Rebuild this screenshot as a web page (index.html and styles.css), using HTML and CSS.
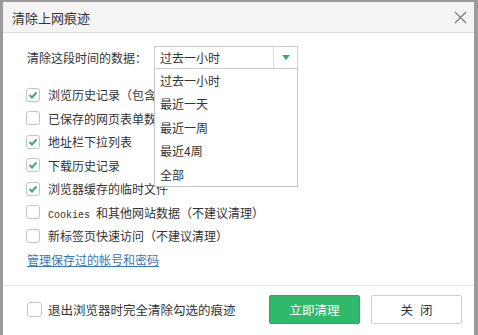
FILE: index.html
```html
<!DOCTYPE html>
<html lang="zh-CN">
<head>
    <meta charset="UTF-8">
    <meta name="viewport" content="width=device-width, initial-scale=1.0">
    <title>清除上网痕迹</title>
    <link rel="stylesheet" href="styles.css">
</head>
<body>
    <div class="dialog">
        <div class="title-bar">
            <span class="title">清除上网痕迹</span>
            <svg class="close" width="13" height="13" viewBox="0 0 13 13">
                <path d="M1 1 L12 12 M12 1 L1 12" stroke="#7a7a7a" stroke-width="1.2" fill="none"/>
            </svg>
        </div>
        <div class="content">
            <div class="range-row">
                <span class="range-label">清除这段时间的数据：</span>
                <div class="select">
                    <span class="select-value">过去一小时</span>
                    <span class="select-arrow">
                        <svg width="8" height="5" viewBox="0 0 8 5"><path d="M0 0 H8 L4 5 Z" fill="#3aaa6a"/></svg>
                    </span>
                    <ul class="options">
                        <li>过去一小时</li>
                        <li>最近一天</li>
                        <li>最近一周</li>
                        <li>最近4周</li>
                        <li>全部</li>
                    </ul>
                </div>
            </div>
            <ul class="items">
                <li class="item"><span class="box checked"><svg width="12" height="12" viewBox="0 0 12 12"><path d="M2.5 6 L5 8.5 L9.5 3.5" stroke="#43a96a" stroke-width="2" fill="none"/></svg></span><span class="item-text cut">浏览历史记录（包含地址栏输入记录）</span></li>
                <li class="item"><span class="box"></span><span class="item-text cut">已保存的网页表单数据</span></li>
                <li class="item"><span class="box checked"><svg width="12" height="12" viewBox="0 0 12 12"><path d="M2.5 6 L5 8.5 L9.5 3.5" stroke="#43a96a" stroke-width="2" fill="none"/></svg></span><span class="item-text">地址栏下拉列表</span></li>
                <li class="item"><span class="box checked"><svg width="12" height="12" viewBox="0 0 12 12"><path d="M2.5 6 L5 8.5 L9.5 3.5" stroke="#43a96a" stroke-width="2" fill="none"/></svg></span><span class="item-text">下载历史记录</span></li>
                <li class="item"><span class="box checked"><svg width="12" height="12" viewBox="0 0 12 12"><path d="M2.5 6 L5 8.5 L9.5 3.5" stroke="#43a96a" stroke-width="2" fill="none"/></svg></span><span class="item-text">浏览器缓存的临时文件</span></li>
                <li class="item"><span class="box"></span><span class="item-text"><span class="latin">Cookies </span>和其他网站数据（不建议清理）</span></li>
                <li class="item"><span class="box"></span><span class="item-text">新标签页快速访问（不建议清理）</span></li>
            </ul>
            <a class="manage" href="#">管理保存过的帐号和密码</a>
        </div>
        <div class="footer">
            <label class="exit-option"><span class="box"></span>退出浏览器时完全清除勾选的痕迹</label>
            <button class="btn btn-primary">立即清理</button>
            <button class="btn btn-close">关 闭</button>
        </div>
    </div>
</body>
</html>
```

FILE: styles.css
```css
body { margin: 0; padding: 2px 4px 0 3px; background: #9a9a9a; font-family: "Noto Sans CJK SC", "Liberation Sans", sans-serif; font-size: 12px; color: #333; }
.dialog { height: 333px; background: #fff; display: flex; flex-direction: column; }
.title-bar { height: 30px; background: #f4f4f4; border-bottom: 1px solid #dcdcdc; display: flex; align-items: center; padding: 0 7px 0 9px; }
.title { flex: 1; font-size: 13px; color: #333; padding-top: 1px; }
.close { margin-top: 1px; }

.content { flex: 1; padding: 13px 0 0 23px; }
.range-row { display: flex; align-items: center; height: 23px; }
.range-label { width: 127px; padding-left: 1px; }
.select { position: relative; width: 142px; height: 21px; border: 1px solid #c9cdd1; display: flex; align-items: center; }
.select-value { flex: 1; padding-left: 5px; }
.select-arrow { width: 23px; height: 21px; border-left: 1px solid #dcdcdc; display: flex; align-items: center; justify-content: center; }
.options { position: absolute; left: -1px; top: 22px; width: 142px; margin: 0; padding: 0; list-style: none; background: #fff; border: 1px solid #c0c6cc; border-top: none; z-index: 2; }
.options li { height: 23.4px; line-height: 23.4px; padding-left: 5px; }

.items { list-style: none; margin: 14px 0 0 0; padding: 0; }
.item { height: 23.5px; display: flex; align-items: center; }
.item-text { white-space: nowrap; }
.item-text.cut { max-width: 106px; overflow: hidden; }
.box { width: 12px; height: 12px; border: 1px solid #c4c4c4; border-radius: 3px; background: #fff; margin-right: 8px; display: flex; align-items: center; justify-content: center; flex: none; }
.latin { font-family: "Liberation Mono", monospace; font-size: 10px; white-space: pre; }
.manage { display: block; height: 23.5px; line-height: 23.5px; color: #3a76b4; text-decoration: underline; padding-left: 1px; }

.footer { height: 50px; border-top: 1px solid #e3e3e3; display: flex; align-items: flex-start; padding: 9px 12px 0 24px; box-sizing: border-box; }
.exit-option { flex: 1; height: 29px; display: flex; align-items: center; font-size: 12.5px; }
.exit-option .box { width: 13px; height: 13px; margin-right: 6px; }
.btn { width: 91px; height: 29px; font-family: inherit; font-size: 12.5px; border-radius: 2px; cursor: pointer; }
.btn-primary { background: #2fb96a; color: #fff; border: 1px solid #29a95f; margin-right: 11px; }
.btn-close { background: #fff; color: #333; border: 1px solid #cfcfcf; word-spacing: 4px; }
```
